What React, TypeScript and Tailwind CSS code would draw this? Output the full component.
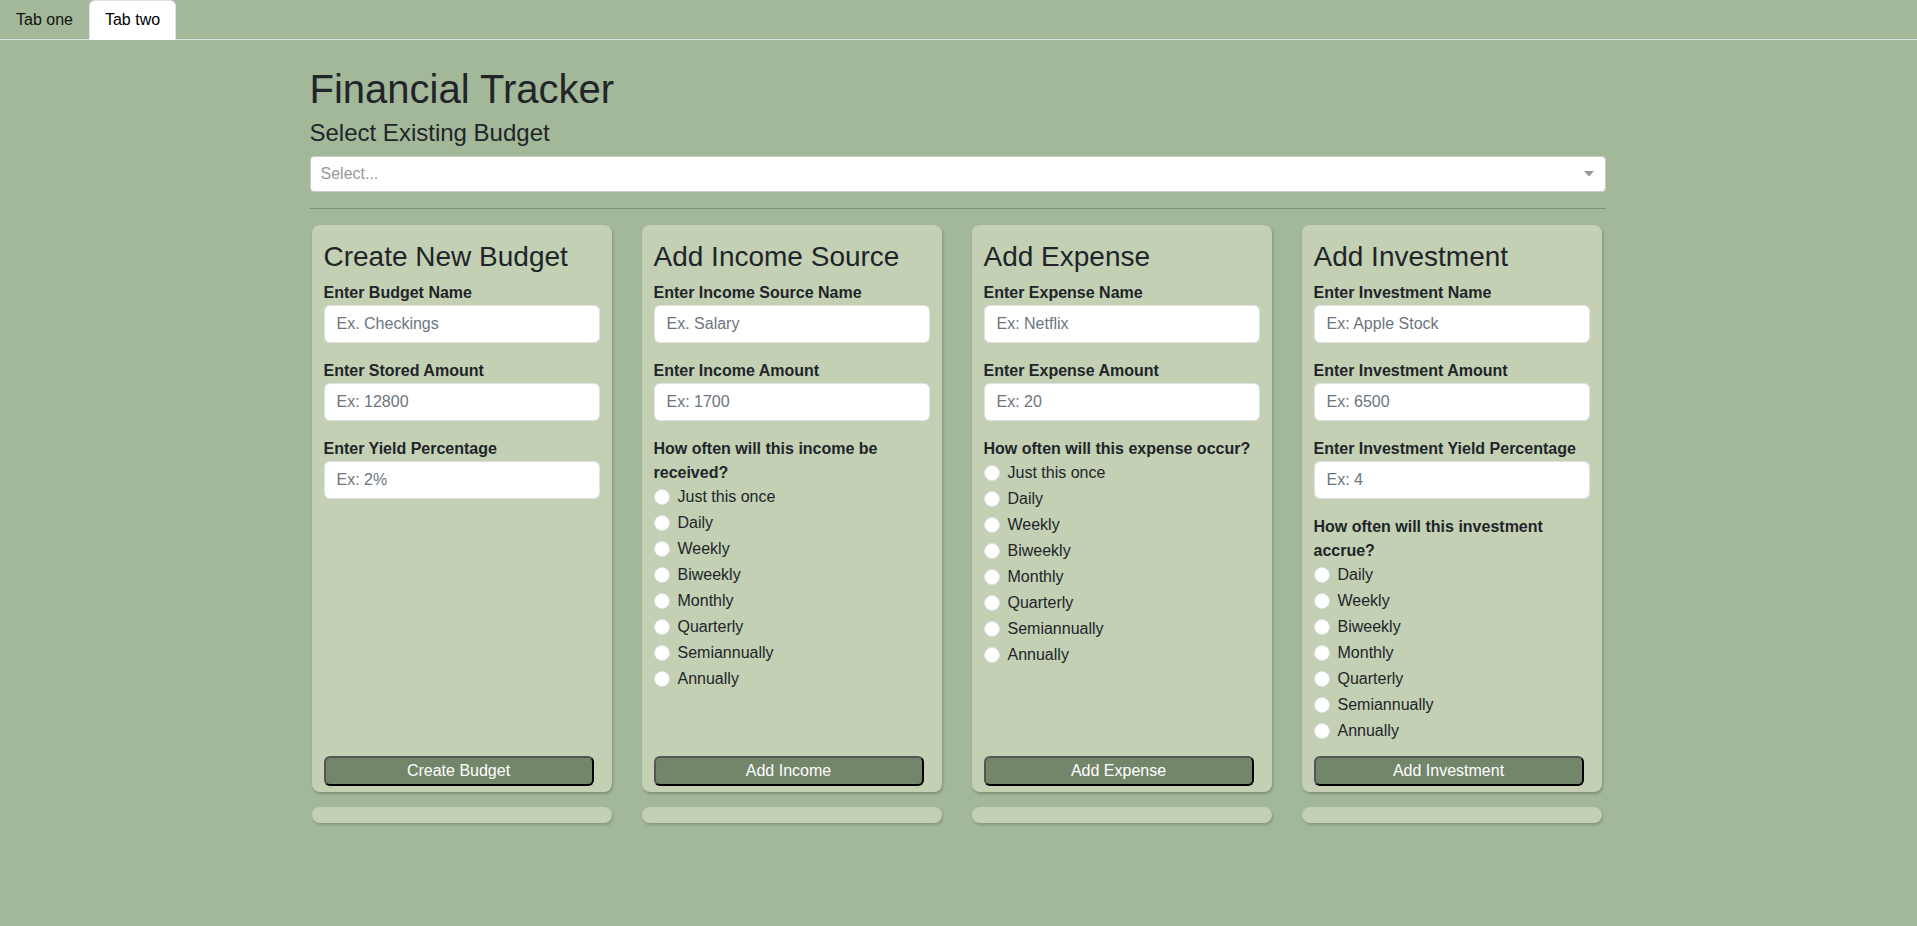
import { useState } from "react";

const FREQ = ["Just this once", "Daily", "Weekly", "Biweekly", "Monthly", "Quarterly", "Semiannually", "Annually"];

type Field = { label: string; placeholder: string };

type CardProps = {
  title: string;
  fields: Field[];
  question?: string;
  options?: string[];
  button: string;
  name: string;
};

function FormCard({ title, fields, question, options, button, name }: CardProps) {
  const [picked, setPicked] = useState<string | null>(null);

  return (
    <div className="flex w-[300px] flex-col gap-[15px]">
      <div className="flex flex-1 flex-col rounded-lg bg-[#c3d0b4] px-3 pt-[15px] pb-[6px] shadow-[1px_2px_3px_rgba(0,0,0,0.22)]">
        <h3 className="mb-2 text-[28px] leading-[1.2] text-[#212529]">{title}</h3>

        {fields.map((f) => (
          <div key={f.label} className="mb-4">
            <label className="block text-base font-bold leading-6 text-[#212529]">{f.label}</label>
            <input
              type="text"
              placeholder={f.placeholder}
              className="block h-[38px] w-full rounded-md border border-[#dee2e6] bg-white px-3 text-base text-[#212529] outline-none placeholder:text-[#6c757d]"
            />
          </div>
        ))}

        {question && (
          <div>
            <p className="text-base font-bold leading-6 text-[#212529]">{question}</p>
            {options?.map((o) => (
              <label key={o} className="mb-[2px] flex h-6 cursor-pointer items-center gap-2 text-base leading-6 text-[#212529]">
                <input
                  type="radio"
                  name={name}
                  checked={picked === o}
                  onChange={() => setPicked(o)}
                  className="h-4 w-4 shrink-0 cursor-pointer appearance-none rounded-full border border-[#dee2e6] bg-white checked:border-[5px] checked:border-[#0d6efd]"
                />
                <span>{o}</span>
              </label>
            ))}
          </div>
        )}

        <div className="mt-auto pt-[11px]">
          <button
            type="button"
            className="h-[30px] w-[270px] rounded-md border-2 border-black bg-[#74866a] text-base text-white [border-style:outset]"
          >
            {button}
          </button>
        </div>
      </div>
      <div className="h-4 rounded-lg bg-[#c3d0b4] shadow-[1px_2px_3px_rgba(0,0,0,0.18)]" />
    </div>
  );
}

export default function App() {
  const [tab, setTab] = useState(1);

  return (
    <div className="min-h-[926px] bg-[#a3b899] font-['Liberation_Sans',Arial,sans-serif] text-[#212529]">
      {/* Tabs */}
      <ul className="flex border-b border-[#dee2e6]">
        {["Tab one", "Tab two"].map((t, i) => (
          <li
            key={t}
            onClick={() => setTab(i)}
            className={
              "-mb-px cursor-pointer rounded-t-md border px-[15px] pt-[7px] pb-[7px] text-base leading-6 " +
              (tab === i ? "border-[#dee2e6] border-b-white bg-white text-black" : "border-transparent text-[#111]")
            }
          >
            {t}
          </li>
        ))}
      </ul>

      <div className="mx-auto w-[1296px] -translate-x-px pt-[25px]">
        <h1 className="mb-[6px] text-[40px] leading-[1.2]">Financial Tracker</h1>
        <h4 className="mb-2 text-2xl leading-[1.2]">Select Existing Budget</h4>

        {/* Budget select */}
        <div className="flex h-9 items-center justify-between rounded border border-[#ccc] bg-white pr-[10px] pl-[10px]">
          <span className="text-base text-[#999]">Select...</span>
          <svg width="10" height="6" viewBox="0 0 10 6" className="mr-px">
            <path d="M0 0 L10 0 L5 5.5 Z" fill="#999" />
          </svg>
        </div>

        <hr className="my-4 border-t border-[#7f9175]" />

        <div className="flex items-stretch gap-[30px] pl-[2px]">
          <FormCard
            name="budget"
            title="Create New Budget"
            fields={[
              { label: "Enter Budget Name", placeholder: "Ex. Checkings" },
              { label: "Enter Stored Amount", placeholder: "Ex: 12800" },
              { label: "Enter Yield Percentage", placeholder: "Ex: 2%" },
            ]}
            button="Create Budget"
          />
          <FormCard
            name="income"
            title="Add Income Source"
            fields={[
              { label: "Enter Income Source Name", placeholder: "Ex. Salary" },
              { label: "Enter Income Amount", placeholder: "Ex: 1700" },
            ]}
            question="How often will this income be received?"
            options={FREQ}
            button="Add Income"
          />
          <FormCard
            name="expense"
            title="Add Expense"
            fields={[
              { label: "Enter Expense Name", placeholder: "Ex: Netflix" },
              { label: "Enter Expense Amount", placeholder: "Ex: 20" },
            ]}
            question="How often will this expense occur?"
            options={FREQ}
            button="Add Expense"
          />
          <FormCard
            name="investment"
            title="Add Investment"
            fields={[
              { label: "Enter Investment Name", placeholder: "Ex: Apple Stock" },
              { label: "Enter Investment Amount", placeholder: "Ex: 6500" },
              { label: "Enter Investment Yield Percentage", placeholder: "Ex: 4" },
            ]}
            question="How often will this investment accrue?"
            options={FREQ.slice(1)}
            button="Add Investment"
          />
        </div>
      </div>
    </div>
  );
}
